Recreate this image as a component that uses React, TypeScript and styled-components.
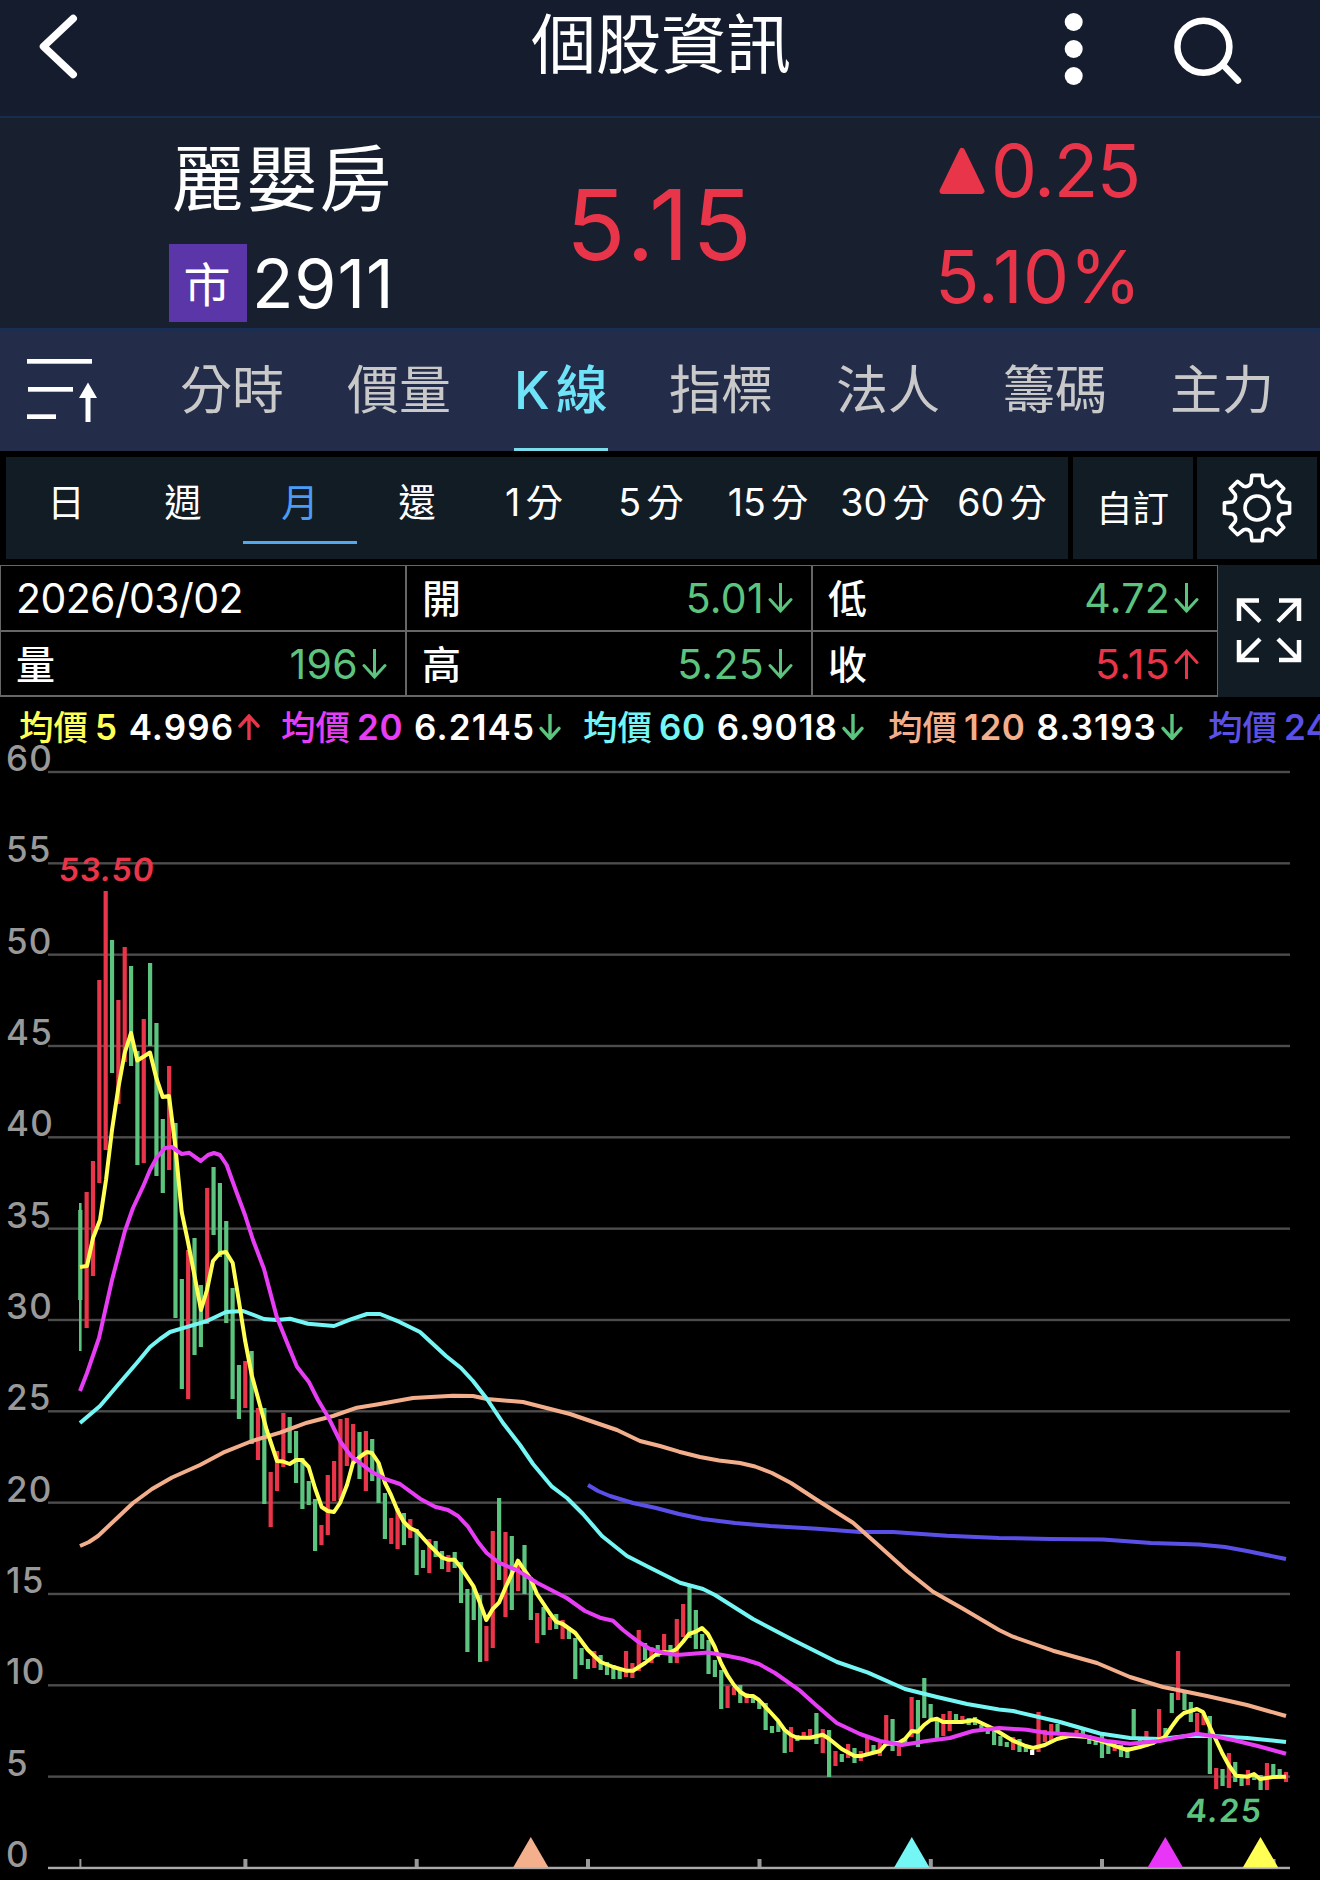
import React from "react";
import styled, { createGlobalStyle } from "styled-components";

const RED = "#e93549";
const GREEN = "#5cc47e";
const LATIN = `Inter, "Noto Sans CJK TC", sans-serif`;

const GlobalStyle = createGlobalStyle`
  * { box-sizing: border-box; }
  body { margin: 0; background: #000; }
`;

const Screen = styled.div`
  width: 1320px;
  height: 1880px;
  overflow: hidden;
  display: flex;
  flex-direction: column;
  background: #000;
  color: #fff;
  font-family: ${LATIN};
  white-space: nowrap;
`;

const Header = styled.header`
  height: 118px;
  flex: none;
  display: grid;
  grid-template-columns: 531px 258px 1fr;
  background: #141c2e;
  border-bottom: 2px solid #162e4c;
`;

const Title = styled.h1`
  margin: 0;
  font-weight: 400;
  font-size: 65px;
  line-height: 90px;
  text-align: center;
`;

const HeaderIcons = styled.div`
  display: flex;
  justify-content: flex-end;
`;

const Quote = styled.section`
  height: 214px;
  flex: none;
  display: grid;
  grid-template-columns: 169px 397px 369px 1fr;
  background: #18202f;
  border-bottom: 4px solid #1a2d52;
`;

const Identity = styled.div`
  grid-column: 2;
  display: flex;
  flex-direction: column;
`;

const StockName = styled.div`
  padding: 13px 0 0 3px;
  height: 126px;
  font-size: 72px;
  line-height: 96px;
  letter-spacing: 1.7px;
`;

const CodeRow = styled.div`
  display: flex;
  align-items: center;
  gap: 5px;
`;

const Market = styled.span`
  width: 78px;
  height: 78px;
  padding-right: 2px;
  background: #5a36a8;
  font-size: 47px;
  line-height: 82px;
  text-align: center;
`;

const Code = styled.span`
  font-size: 68px;
  line-height: 78px;
  letter-spacing: 0.9px;
`;

const Price = styled.div`
  padding-top: 58px;
  font-size: 98px;
  line-height: 98px;
  letter-spacing: 3.2px;
  color: ${RED};
`;

const Change = styled.div`
  display: flex;
  flex-direction: column;
  color: ${RED};
  font-size: 73px;
  line-height: 106px;
`;

const ChangeRow = styled.div<{ $tracking: number }>`
  display: flex;
  align-items: center;
  gap: 6px;
  letter-spacing: ${(p) => p.$tracking}px;
`;

const TriangleSlot = styled.span`
  display: flex;
  padding-left: 4px;
`;

const Tabs = styled.nav`
  height: 119px;
  flex: none;
  display: flex;
  background: #232d4a;
`;

const SortSlot = styled.div`
  width: 180px;
`;

const TabList = styled.div`
  display: flex;
  gap: 63px;
`;

const Tab = styled.div<{ $active?: boolean }>`
  display: flex;
  justify-content: center;
  gap: 6px;
  width: ${(p) => (p.$active ? 94 : 104)}px;
  margin-right: ${(p) => (p.$active ? -2 : 0)}px;
  font-size: 52px;
  font-weight: ${(p) => (p.$active ? 500 : 400)};
  line-height: 118px;
  height: 119px;
  color: ${(p) => (p.$active ? "#6fe3f7" : "#c9c9c9")};
  border-bottom: 3px solid ${(p) => (p.$active ? "#7ddceb" : "transparent")};
`;

const Toolbar = styled.div`
  height: 114px;
  flex: none;
  display: grid;
  grid-template-columns: 1062px 120px 120px;
  grid-template-rows: 102px;
  column-gap: 4.5px;
  padding: 6px 3px 6px 6px;
`;

const Panel = styled.div`
  background: #111c24;
  display: flex;
  justify-content: center;
`;

const Periods = styled(Panel)`
  justify-content: flex-start;
  padding-left: 3px;
`;

const Period = styled.div<{ $active?: boolean }>`
  flex: none;
  width: 114px;
  height: 87px;
  margin-right: 3px;
  display: flex;
  justify-content: center;
  gap: 5px;
  font-size: 37.5px;
  line-height: 92px;
  color: ${(p) => (p.$active ? "#4b9cf6" : "#fff")};
  border-bottom: 3px solid ${(p) => (p.$active ? "#54a8ee" : "transparent")};
`;

const Custom = styled.span`
  padding-top: 3px;
  font-size: 36.5px;
  line-height: 99px;
`;

const Ohlc = styled.div`
  height: 132px;
  flex: none;
  display: grid;
  grid-template-columns: 1218px 102px;
`;

const Table = styled.div`
  display: grid;
  grid-template-columns: repeat(3, 404px);
  grid-template-rows: 64px 63px;
  gap: 2px;
  padding: 1px 1px 2px;
  background: #666;
`;

const Cell = styled.div`
  background: #000;
  display: flex;
  align-items: center;
  justify-content: space-between;
  padding: 0 18px 0 15px;
`;

const Label = styled.span`
  padding-top: 2px;
  font-size: 39px;
  font-weight: 500;
  line-height: 60px;
`;

const DateText = styled.span`
  font-size: 41px;
  letter-spacing: -0.6px;
`;

const Value = styled.span<{ $up?: boolean }>`
  display: flex;
  align-items: center;
  gap: 4px;
  font-size: 41px;
  letter-spacing: 0.3px;
  color: ${(p) => (p.$up ? RED : GREEN)};
`;

const Legend = styled.div`
  height: 43px;
  flex: none;
  display: flex;
  padding: 9px 0 0 19px;
  font-size: 35px;
  font-weight: 600;
  line-height: 42px;
`;

const Average = styled.div<{ $width: number }>`
  flex: none;
  width: ${(p) => p.$width}px;
  height: 42px;
  display: flex;
  align-items: center;
`;

const AverageName = styled.span<{ $color: string }>`
  display: flex;
  align-items: center;
  gap: 7px;
  margin-right: 11px;
  letter-spacing: 0.6px;
  color: ${(p) => p.$color};
`;

const Kanji = styled.span`
  padding-top: 2px;
  font-size: 34.5px;
  font-weight: 500;
  letter-spacing: 0;
`;

const AverageValue = styled.span`
  margin-right: 4px;
  letter-spacing: 1.1px;
`;

const Chart = styled.svg`
  display: block;
  flex: none;
  overflow: visible;
  font-family: ${LATIN};
  font-weight: 500;
`;

function Arrow({ up, size, weight }: { up?: boolean; size: number; weight: number }) {
  const h = size * 1.2;
  const m = size / 2;
  const d = up
    ? `M${m} ${h}V2M2 ${m + 1}L${m} 2L${size - 2} ${m + 1}`
    : `M${m} 0V${h - 2}M2 ${h - m - 1}L${m} ${h - 2}L${size - 2} ${h - m - 1}`;
  return (
    <svg width={size} height={h} viewBox={`0 0 ${size} ${h}`} fill="none" stroke={up ? RED : GREEN} strokeWidth={weight} strokeLinecap="round">
      <path d={d} />
    </svg>
  );
}

/* Monthly candles: colour, high and low in chart pixels. */
const CANDLES: string = `g1210-1300 r1192-1328 r1161-1276 r980-1183 r891-1150 g940-1073 r1000-1104 r947-1062 g966-1066 g1051-1165
r1019-1163 g963-1046 g1023-1176 g1119-1193 r1066-1170 g1123-1318 g1279-1389 r1250-1399 g1238-1355 g1285-1347
r1188-1324 g1167-1235 g1183-1257 g1221-1323 g1288-1399 g1365-1419 r1361-1408 g1351-1444 r1408-1460 g1408-1504
r1472-1527 r1451-1491 r1413-1467 g1417-1453 g1431-1483 g1458-1509 g1481-1505 g1499-1551 r1525-1545 r1475-1535
r1461-1501 r1419-1500 r1418-1466 r1424-1462 g1432-1479 r1431-1491 g1439-1481 g1463-1503 g1493-1539 r1518-1544
r1508-1549 g1513-1545 r1519-1538 g1529-1575 g1550-1568 r1539-1573 g1541-1557 g1551-1569 r1555-1572 g1552-1568
g1562-1603 g1589-1652 g1587-1620 g1595-1662 r1626-1661 r1531-1648 g1498-1580 r1532-1617 g1536-1610 r1562-1591
g1545-1594 g1577-1620 r1613-1643 g1607-1635 r1617-1630 g1614-1629 r1620-1639 g1627-1639 g1638-1679 g1648-1665
g1659-1669 r1651-1668 g1655-1670 g1662-1675 g1665-1679 g1670-1679 r1651-1677 r1663-1678 r1630-1671 g1643-1660
r1647-1663 g1645-1657 r1634-1653 g1645-1663 r1619-1663 r1604-1637 g1587-1638 g1610-1649 g1634-1649 g1640-1674
g1660-1677 g1670-1709 r1686-1708 r1687-1695 g1685-1703 r1693-1703 g1697-1703 g1700-1709 g1703-1730 g1726-1733
g1722-1732 g1730-1753 r1727-1752 g1735-1741 r1732-1738 r1729-1737 g1713-1744 r1729-1753 g1730-1777 r1751-1766
g1754-1762 r1744-1758 g1748-1763 r1751-1761 r1738-1754 g1745-1753 r1743-1756 r1715-1745 g1719-1751 r1743-1756
g1738-1745 r1697-1737 g1700-1747 g1678-1718 g1704-1720 g1718-1738 r1714-1736 r1711-1731 g1714-1723 r1716-1723
g1718-1725 g1717-1725 g1725-1730 g1728-1734 g1731-1745 g1736-1746 g1742-1747 r1737-1750 g1739-1752 g1746-1752
w1750-1755 r1712-1752 r1730-1742 r1724-1741 g1724-1735 g1732-1737 g1733-1738 r1730-1736 g1728-1737 g1735-1744
g1737-1745 g1735-1758 g1742-1754 r1745-1751 g1745-1757 g1747-1758 g1709-1740 g1737-1743 r1731-1747 g1738-1745
r1709-1738 g1728-1740 g1693-1713 r1651-1700 g1693-1710 g1702-1722 r1713-1733 r1712-1725 g1716-1774 r1768-1789
g1769-1786 r1753-1788 g1762-1782 g1776-1786 r1770-1785 g1774-1780 g1775-1790 r1763-1790 g1764-1777 g1769-1777
r1772-1782`;

const COLORS: Record<string, string> = { r: RED, g: GREEN, w: "#fff" };

const candles = CANDLES.split(/\s+/).map((c, i) => {
  const [top, bottom] = c.slice(1).split("-").map(Number);
  return { x: 80.3 + i * 6.3458, top, bottom, color: COLORS[c[0]] };
});

const LINES = [
  {
    color: "#5a50e8",
    points:
      "588,1485 598,1491 610,1496 633,1503 656,1508 679,1514 703,1519 735,1523 770,1526 817,1528.7 860,1532 893,1532 947,1535.7 999,1538 1050,1539 1103,1539.5 1151,1543 1199,1544.5 1225,1547 1247,1551 1286,1559",
  },
  {
    color: "#f3ae8b",
    points:
      "80,1546 89,1542 98,1536 115,1520 133,1503 152,1489 172,1477.5 200,1465 223,1452.7 252,1441 280,1432.7 307,1422.7 333,1416 357,1407.7 377,1404.5 413,1398 453,1395.7 473,1396 487,1399 523,1402 570,1414 617,1430 640,1441 660,1446 679,1451.7 700,1457 719,1460.5 740,1463 755,1466.5 772,1473 791,1483 817,1500 853,1522.7 877,1544 907,1571 933,1591.7 963,1608.7 999,1630 1013,1636.7 1053,1650.7 1097,1663 1130,1677 1163,1687 1207,1696 1247,1705 1286,1716",
  },
  {
    color: "#74f6f5",
    points:
      "80,1423 100,1406 117,1386 137,1362.7 150,1347 160,1339 170,1332 188,1326.7 207,1321 226,1312 243,1311 264,1319 277,1320 290,1318.7 308,1323.7 334,1326 350,1319.7 367,1314 380,1314 399,1321.7 420,1332 446,1356 461,1368 473,1381 487,1399 503,1423 520,1445 533,1464 552,1486.7 567,1498 583,1514 602,1536 627,1556 650,1567.7 680,1582.7 703,1589 715,1595 753,1619 793,1640 837,1662 868,1672.7 905,1689 937,1697 967,1704 999,1709.5 1013,1711 1060,1722 1100,1733.5 1130,1738 1160,1739 1187,1736 1213,1736 1247,1738 1286,1742",
  },
  {
    color: "#ffff54",
    points:
      "80,1267 87,1266 93,1238 100,1220 106,1180 112,1130 118.3,1088 124.7,1053 131,1033 137.3,1060.5 143,1057 150,1052.5 156,1077 162.7,1097 169,1096 175,1143 181.7,1212 188,1242 194,1273 201,1310 207,1290 213,1261 220,1253 226,1252 232.7,1263 238.7,1300 245,1340 251.7,1375 258,1398 266.7,1430 277,1461 283,1461.5 289.7,1464 296,1460 302,1460 308.7,1467 315,1488 321.7,1507 327.7,1511 334,1512 340,1503 347,1485 353,1463 359.7,1457 366.7,1452 372,1453 378.7,1463 385,1483 391,1495 397.3,1510 403.7,1521.7 410,1528 416.7,1531 429.3,1545 442,1557.7 448,1559.7 454.7,1559.7 461,1567.7 473.7,1586.7 480,1603 486.3,1620 492.7,1609 499,1602.7 505.3,1588 511.7,1574 518,1560.7 524.3,1570 530.7,1579 537,1594 549.7,1613 556,1621.7 562.7,1624 575.3,1633 588,1650 600.7,1662 613.3,1667 626,1670.7 633,1670.7 645,1663 656.7,1654 664,1652 670,1652.5 676.7,1649 683,1641.7 689,1634 695.7,1631.7 702,1628 708,1634 714.7,1646.7 721,1663 727.7,1675.7 734,1685 740,1691.7 746.7,1696 753,1696 759,1700 772,1714 778,1720.7 784.7,1730 791,1735 797,1737.7 810,1737.7 822.7,1734.7 829,1738.7 841.7,1749 854.7,1756 861,1756 880,1751 886,1744 899,1742.7 905,1739 911.7,1731 918,1731.7 924,1725 930.7,1720 937,1718.7 943,1722 962,1722 975,1720 987.7,1726 994,1729 1013,1740.7 1025.7,1746 1033,1748 1044.7,1745 1057,1739 1070,1735.7 1087,1737 1103,1741.7 1116.7,1746.7 1127,1750 1140,1747 1152.7,1743 1165,1736.7 1171.7,1726.7 1178,1718 1184,1713 1197,1709 1203,1712 1209.7,1726.7 1216,1740 1222,1752.7 1228.7,1765 1236,1775.7 1247.7,1776.7 1254,1774 1260,1779 1273,1777 1286,1776.7",
  },
  {
    color: "#e63df5",
    points:
      "80,1391 87,1373 99,1338 112,1280 124.7,1231.7 133,1208 143,1186.7 150,1170 156.7,1157.7 165,1148 171.7,1147 181.7,1154 189,1152.7 200.7,1161 208,1155 214,1153 220,1155 226.7,1165 235.7,1190 245,1215 253,1240 264,1269 276.7,1316.7 286.7,1341.7 297,1366.7 308.7,1381.7 318,1400 328,1416.7 340,1441 351,1456 360,1463 372,1472 385,1479 400,1484 420,1498.7 435,1506.7 448,1510 458,1516 468,1526.7 478,1542 486.7,1553 499,1562.7 518,1570.7 537,1582.7 566.7,1598 585,1611 600,1617.7 613,1620.7 623,1630 636.7,1640.7 650,1649 664,1653 677,1655 708,1652.5 726.7,1655.7 743,1659 759,1664 775,1673 800,1690.7 816.7,1705.7 836.7,1723 860,1734 880,1741 902,1745 926.7,1741 950,1738 973,1731 999,1728 1026.7,1729.7 1046.7,1733 1080,1735 1106.7,1741 1130,1743.7 1160,1741 1180,1737 1196.7,1733.7 1213,1736 1233,1740 1256.7,1745.7 1286,1753.7",
  },
];

const LEVELS = [60, 55, 50, 45, 40, 35, 30, 25, 20, 15, 10, 5, 0];
const TICKS = [245.4, 416.7, 588, 759.5, 930.8, 1102, 1273.5];
const MARKERS = [
  { x: 530.8, color: "#f4b08c" },
  { x: 911.8, color: "#74f6f5" },
  { x: 1165.3, color: "#e935f8" },
  { x: 1260.5, color: "#ffff54" },
];

function PriceChart() {
  return (
    <Chart width="1320" height="1140" viewBox="0 740 1320 1140">
      {LEVELS.map((v, i) => {
        const y = 772 + i * 91.33;
        return (
          <g key={v}>
            <rect x="48" y={y - 1.2} width="1242" height="2.4" fill={v === 0 ? "#aaa" : "#4c4c4c"} />
            <text x="6" y={y - 1} fontSize="35" letterSpacing="1.2" fill="#999">
              {v}
            </text>
          </g>
        );
      })}
      <rect x="79.4" y="1859" width="2" height="8" fill="#999" />
      {TICKS.map((x) => (
        <rect key={x} x={x - 2} y="1859" width="4" height="8" fill="#999" />
      ))}
      {MARKERS.map((m) => (
        <path key={m.x} d={`M${m.x} 1837L${m.x + 17.7} 1867.5H${m.x - 17.7}Z`} fill={m.color} />
      ))}
      <rect x="79" y="1203" width="2.6" height="148" fill={GREEN} />
      {candles.map((c, i) => (
        <rect key={i} x={c.x - 2.1} y={c.top} width="4.2" height={c.bottom - c.top} fill={c.color} />
      ))}
      {LINES.map((l) => (
        <polyline key={l.color} points={l.points} fill="none" stroke={l.color} strokeWidth="4" strokeLinejoin="round" />
      ))}
      <text transform="translate(58 881) skewX(-6)" fontSize="32" fontWeight="600" textLength="95" fill={RED}>
        53.50
      </text>
      <text transform="translate(1185 1822) skewX(-5)" fontSize="32" fontWeight="600" textLength="75" fill={GREEN}>
        4.25
      </text>
    </Chart>
  );
}

function gearPath() {
  const parts: string[] = [];
  const at = (r: number, deg: number) => {
    const a = (deg * Math.PI) / 180;
    return `${(r * Math.sin(a)).toFixed(2)} ${(-r * Math.cos(a)).toFixed(2)}`;
  };
  for (let k = 0; k < 8; k++) {
    const c = k * 45;
    parts.push(`${k ? "L" : "M"}${at(25.5, c - 13.5)}L${at(33, c - 9)}L${at(33, c + 9)}L${at(25.5, c + 13.5)}Q${at(22, c + 22.5)} ${at(25.5, c + 31.5)}`);
  }
  return parts.join("") + "Z";
}

const PERIODS = [["日"], ["週"], ["月"], ["還"], ["1", "分"], ["5", "分"], ["15", "分"], ["30", "分"], ["60", "分"]];
const TAB_NAMES = [["分時"], ["價量"], ["K", "線"], ["指標"], ["法人"], ["籌碼"], ["主力"]];
const AVERAGES = [
  { n: "5", value: "4.996", up: true, color: "#ffff54", width: 262 },
  { n: "20", value: "6.2145", color: "#e63df5", width: 302 },
  { n: "60", value: "6.9018", color: "#74f6f5", width: 305 },
  { n: "120", value: "8.3193", color: "#f3ae8b", width: 320 },
  { n: "240", value: "", color: "#5a50e8", width: 140 },
];

export default function App() {
  return (
    <Screen>
      <GlobalStyle />
      <Header>
        <svg width="120" height="100" fill="none" stroke="#fff" strokeWidth="7.5" strokeLinecap="round" strokeLinejoin="round">
          <path d="M73.2 18.5L43.5 46.5L73.2 74.5" />
        </svg>
        <Title>個股資訊</Title>
        <HeaderIcons>
          <svg width="280" height="100" viewBox="1040 0 280 100" fill="#fff">
            <circle cx="1073.7" cy="22" r="9" />
            <circle cx="1073.7" cy="49" r="9" />
            <circle cx="1073.7" cy="76" r="9" />
            <circle cx="1203.4" cy="46.7" r="26" fill="none" stroke="#fff" strokeWidth="6.5" />
            <path d="M1224 66L1238 80.5" stroke="#fff" strokeWidth="6.5" strokeLinecap="round" />
          </svg>
        </HeaderIcons>
      </Header>
      <Quote>
        <Identity>
          <StockName>麗嬰房</StockName>
          <CodeRow>
            <Market>市</Market>
            <Code>2911</Code>
          </CodeRow>
        </Identity>
        <Price>5.15</Price>
        <Change>
          <ChangeRow $tracking={-1.3}>
            <TriangleSlot>
              <svg width="46" height="48" fill={RED} stroke={RED} strokeWidth="6" strokeLinejoin="round">
                <path d="M23 4L42.5 44H3.5Z" />
              </svg>
            </TriangleSlot>
            0.25
          </ChangeRow>
          <ChangeRow $tracking={0.4}>5.10%</ChangeRow>
        </Change>
      </Quote>
      <Tabs>
        <SortSlot>
          <svg width="120" height="119" viewBox="0 332 120 119" fill="#fff">
            <rect x="27" y="359" width="65" height="4.7" />
            <rect x="28" y="387" width="45" height="4.7" />
            <rect x="27" y="414.3" width="29" height="4.7" />
            <path d="M88 382.5L97 398H90.5V422H85.5V398H79Z" />
          </svg>
        </SortSlot>
        <TabList>
          {TAB_NAMES.map((t) => (
            <Tab key={t.join("")} $active={t[0] === "K"}>
              {t.map((s) => (
                <span key={s}>{s}</span>
              ))}
            </Tab>
          ))}
        </TabList>
      </Tabs>
      <Toolbar>
        <Periods>
          {PERIODS.map((p) => (
            <Period key={p.join("")} $active={p[0] === "月"}>
              {p.map((s) => (
                <span key={s}>{s}</span>
              ))}
            </Period>
          ))}
        </Periods>
        <Panel>
          <Custom>自訂</Custom>
        </Panel>
        <Panel>
          <svg width="120" height="102" viewBox="-60 -51 120 102" fill="none" stroke="#fff" strokeWidth="3.6" strokeLinejoin="round">
            <path d={gearPath()} />
            <circle r="12" />
          </svg>
        </Panel>
      </Toolbar>
      <Ohlc>
        <Table>
          <Cell>
            <DateText>2026/03/02</DateText>
          </Cell>
          <Cell>
            <Label>開</Label>
            <Value>5.01<Arrow size={25} weight={3} /></Value>
          </Cell>
          <Cell>
            <Label>低</Label>
            <Value>4.72<Arrow size={25} weight={3} /></Value>
          </Cell>
          <Cell>
            <Label>量</Label>
            <Value>196<Arrow size={25} weight={3} /></Value>
          </Cell>
          <Cell>
            <Label>高</Label>
            <Value>5.25<Arrow size={25} weight={3} /></Value>
          </Cell>
          <Cell>
            <Label>收</Label>
            <Value $up>5.15<Arrow up size={25} weight={3} /></Value>
          </Cell>
        </Table>
        <Panel>
          <svg width="102" height="132" viewBox="1218 565 102 132" fill="none" stroke="#fff" strokeWidth="4.5">
            <path d="M1239 621V600.5H1259M1240 601.5L1260 621.5M1279 600.5H1299V621M1298 601.5L1278 621.5M1239 640V660H1259M1240 659L1260 639M1279 660H1299V640M1298 659L1278 639" />
          </svg>
        </Panel>
      </Ohlc>
      <Legend>
        {AVERAGES.map((a) => (
          <Average key={a.n} $width={a.width}>
            <AverageName $color={a.color}>
              <Kanji>均價</Kanji>
              <span>{a.n}</span>
            </AverageName>
            {a.value && <AverageValue>{a.value}</AverageValue>}
            {a.value && <Arrow up={a.up} size={22} weight={3.4} />}
          </Average>
        ))}
      </Legend>
      <PriceChart />
    </Screen>
  );
}
